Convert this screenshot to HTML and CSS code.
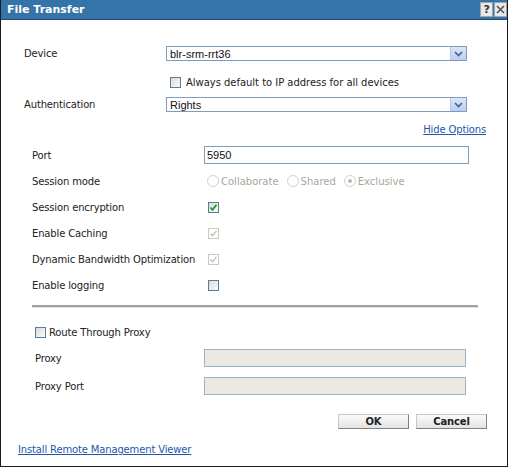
FILE: index.html
```html
<!DOCTYPE html>
<html>
<head>
<meta charset="utf-8">
<link rel="stylesheet" href="styles.css">
</head>
<body>
<div class="dialog">
  <div class="titlebar">
    <span class="title">File Transfer</span>
    <span class="tbtns"><span class="tbtn">?</span><span class="tbtn x">
      <svg width="11" height="11" viewBox="0 0 11 11"><path d="M2 2 L9 9 M9 2 L2 9" stroke="#555" stroke-width="1.6"/></svg></span></span>
  </div>
  <div class="content">
    <div class="row top r-device">
      <span class="label">Device</span>
      <div class="select"><span class="val">blr-srm-rrt36</span><span class="arrow"><svg width="9" height="6" viewBox="0 0 9 6"><path d="M1 1 L4.5 4.5 L8 1" fill="none" stroke="#4a5f8a" stroke-width="1.6"/></svg></span></div>
    </div>
    <div class="row r-always">
      <span class="cb"></span><span class="cbtext always">Always default to IP address for all devices</span>
    </div>
    <div class="row top r-auth">
      <span class="label">Authentication</span>
      <div class="select"><span class="val">Rights</span><span class="arrow"><svg width="9" height="6" viewBox="0 0 9 6"><path d="M1 1 L4.5 4.5 L8 1" fill="none" stroke="#4a5f8a" stroke-width="1.6"/></svg></span></div>
    </div>
    <div class="hide"><a class="link">Hide Options</a></div>
    <div class="options">
      <div class="orow"><span class="olabel">Port</span><div class="input"><span class="val">5950</span></div></div>
      <div class="orow"><span class="olabel">Session mode</span>
        <div class="radios">
          <span class="radio"></span><span class="rtext">Collaborate</span>
          <span class="radio"></span><span class="rtext">Shared</span>
          <span class="radio on"></span><span class="rtext">Exclusive</span>
        </div>
      </div>
      <div class="orow"><span class="olabel">Session encryption</span><span class="cb checked"><svg width="9" height="9" viewBox="0 0 9 9"><path d="M1.5 4.5 L3.5 6.8 L7.5 1.8" fill="none" stroke="#1f9a1f" stroke-width="1.8"/></svg></span></div>
      <div class="orow"><span class="olabel">Enable Caching</span><span class="cb disabled"><svg width="9" height="9" viewBox="0 0 9 9"><path d="M1.5 4.5 L3.5 6.8 L7.5 1.8" fill="none" stroke="#bdbbb0" stroke-width="1.3"/></svg></span></div>
      <div class="orow"><span class="olabel">Dynamic Bandwidth Optimization</span><span class="cb disabled"><svg width="9" height="9" viewBox="0 0 9 9"><path d="M1.5 4.5 L3.5 6.8 L7.5 1.8" fill="none" stroke="#bdbbb0" stroke-width="1.3"/></svg></span></div>
      <div class="orow"><span class="olabel">Enable logging</span><span class="cb"></span></div>
    </div>
    <div class="sep"></div>
    <div class="proxy">
      <div class="prow route"><span class="cb"></span><span class="cbtext">Route Through Proxy</span></div>
      <div class="prow"><span class="plabel">Proxy</span><div class="input dis"></div></div>
      <div class="prow"><span class="plabel">Proxy Port</span><div class="input dis"></div></div>
    </div>
    <div class="buttons">
      <span class="btn">OK</span><span class="btn">Cancel</span>
    </div>
    <div class="install"><a class="link">Install Remote Management Viewer</a></div>
  </div>
</div>
</body>
</html>
```
FILE: styles.css
```css
html, body { margin: 0; padding: 0; background: #fff; }
body { font-family: "DejaVu Sans", Verdana, sans-serif; font-size: 10px; letter-spacing: -0.15px; color: #222; }
.dialog { width: 508px; height: 467px; box-sizing: border-box; border: 1px solid #1a1a1a; border-top: none; display: flex; flex-direction: column; }
.titlebar { height: 19px; background: #3574a9; border-bottom: 1px solid #1f4a73; display: flex; align-items: center; justify-content: space-between; padding: 0 0 0 6px; }
.title { color: #fff; font-weight: bold; font-size: 11px; letter-spacing: 0; }
.tbtns { display: flex; gap: 1px; }
.tbtn { width: 11px; height: 13px; background: #e9e9e6; border: 1px solid #9aa6b2; display: flex; align-items: center; justify-content: center; font-weight: bold; font-size: 11px; color: #333; }
.content { flex: 1; display: flex; flex-direction: column; }
.row { display: flex; align-items: center; }
.row.top { height: 17px; padding-left: 23px; }
.r-device { margin-top: 25px; }
.label { width: 142px; }
.select { width: 301px; height: 15px; box-sizing: border-box; border: 1px solid #7f9db9; display: flex; align-items: center; justify-content: space-between; }
.val { font-family: "Liberation Sans", Arial, sans-serif; font-size: 11px; letter-spacing: 0; color: #111; padding-left: 3px; }
.arrow { width: 15px; height: 13px; background: linear-gradient(#dbe6fb, #bccdf5); border-left: 1px solid #b7c8ee; display: flex; align-items: center; justify-content: center; margin-right: 0; }
.r-always { height: 16px; margin-top: 12px; padding-left: 169px; }
.cb { width: 11px; height: 11px; box-sizing: border-box; border: 1px solid #587aa3; background: linear-gradient(135deg, #dcdcd6, #fafaf8); display: inline-flex; align-items: center; justify-content: center; flex: none; }
.cb.disabled { border-color: #cbc9bd; background: #fff; }
.cbtext { margin-left: 5px; }
.cbtext.always { letter-spacing: -0.03px; }
.r-auth { margin-top: 6px; }
.hide { height: 14px; margin-top: 11px; display: flex; justify-content: flex-end; padding-right: 21px; }
.link { color: #1d56ab; text-decoration: underline; }
.options { margin-top: 4px; padding-left: 31px; }
.orow { display: flex; align-items: center; height: 26px; }
.olabel { width: 172px; flex: none; }
.orow .cb { margin-left: 4px; }
.input { width: 265px; height: 18px; box-sizing: border-box; border: 1px solid #7f9db9; display: flex; align-items: center; }
.input .val { padding-left: 2px; }
.radios { display: flex; align-items: center; color: #a8a69c; margin-left: 3px; letter-spacing: 0; }
.radio { width: 12px; height: 12px; border: 1px solid #d3d1c7; border-radius: 50%; box-sizing: border-box; display: inline-flex; align-items: center; justify-content: center; margin-right: 2px; }
.radio.on::after { content: ""; width: 4px; height: 4px; border-radius: 50%; background: #b9b7ad; }
.rtext { margin-right: 8px; }
.sep { margin: 7px 29px 0 31px; height: 2px; background: #a0a0a0; border-bottom: 1px solid #e0e0e0; }
.proxy { margin-top: 12px; padding-left: 34px; }
.prow { display: flex; align-items: center; height: 28px; }
.prow.route { height: 24px; }
.prow.route .cbtext { margin-left: 3px; }
.plabel { width: 169px; flex: none; }
.prow .input { width: 262px; }
.input.dis { background: #ebe9e2; border-color: #98b2cf; }
.buttons { display: flex; justify-content: flex-end; gap: 7px; padding-right: 20px; margin-top: 14px; }
.btn { width: 71px; height: 15px; box-sizing: border-box; border: 1px solid #8f8f8f; border-color: #c8c8c8 #808080 #808080 #c8c8c8; background: linear-gradient(#fafafa, #e3e3e3); display: flex; align-items: center; justify-content: center; font-weight: bold; font-size: 10px; color: #222; }
.install { margin-top: 15px; padding-left: 17px; }
```
